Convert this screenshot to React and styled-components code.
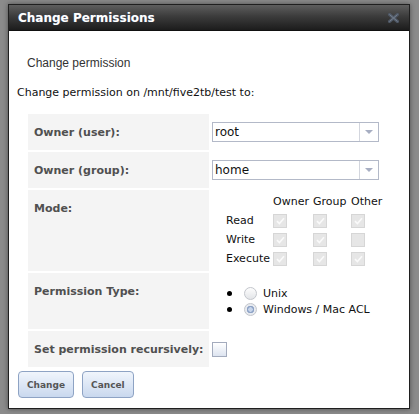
import React from "react";
import styled, { createGlobalStyle } from "styled-components";

const GlobalStyle = createGlobalStyle`
  html, body { margin: 0; padding: 0; background: #8b8b8b; }
  body { font-family: "DejaVu Sans", Verdana, sans-serif; }
`;

const Page = styled.div`
  width: 419px;
  height: 414px;
  padding: 4px 0 0 8px;
  box-sizing: border-box;
`;

const Dialog = styled.div`
  width: 402px;
  height: 405px;
  box-sizing: border-box;
  border: 1px solid #1f1f1f;
  background: #fff;
  box-shadow: 0 0 5px rgba(0, 0, 0, 0.45);
  display: flex;
  flex-direction: column;
`;

const TitleBar = styled.div`
  height: 25px;
  flex: none;
  display: flex;
  align-items: center;
  justify-content: space-between;
  padding: 0 10px 0 9px;
  background: linear-gradient(#5e5e5e, #3c3c3c 45%, #1c1c1c);
  border-bottom: 1px solid #111;
`;

const Title = styled.span`
  font-family: "DejaVu Sans", Verdana, sans-serif;
  font-weight: bold;
  font-size: 12px;
  color: #fff;
  text-shadow: 0 0 1px rgba(120, 150, 200, 0.6);
`;

const Body = styled.div`
  padding: 0 8px;
  display: flex;
  flex-direction: column;
`;

const Intro = styled.div`
  margin: 24px 0 0 10px;
  font-family: "Liberation Sans", Arial, sans-serif;
  font-size: 12px;
  line-height: 16px;
  color: #333;
`;

const PathLine = styled.div`
  margin-top: 15px;
  font-size: 11px;
  line-height: 14px;
  color: #111;
`;

const FormGrid = styled.div`
  margin: 14px 0 0 11px;
  display: grid;
  grid-template-columns: 181px 1fr;
  grid-template-rows: 36px 36px 81px 56px 36px;
  column-gap: 2px;
  row-gap: 2px;
`;

const Label = styled.div`
  background: #f4f4f4;
  padding: 12px 6px 0;
  font-weight: bold;
  font-size: 11px;
  line-height: 13px;
  color: #505050;
  white-space: nowrap;
  box-sizing: border-box;
`;

const Value = styled.div`
  box-sizing: border-box;
  padding: ${(p) => p.$pad || "0"};
  display: ${(p) => (p.$center ? "flex" : "block")};
  align-items: center;
`;

const Select = styled.div`
  width: 167px;
  height: 20px;
  box-sizing: border-box;
  border: 1px solid #b3b9c8;
  background: #fff;
  display: flex;
  align-items: stretch;
`;

const SelectText = styled.span`
  flex: 1;
  font-size: 12px;
  line-height: 18px;
  padding-left: 2px;
  color: #111;
`;

const SelectArrow = styled.span`
  width: 18px;
  border-left: 1px solid #d3d6de;
  display: flex;
  align-items: center;
  justify-content: center;
  &::after {
    content: "";
    border-left: 4px solid transparent;
    border-right: 4px solid transparent;
    border-top: 4px solid #a7aec2;
  }
`;

const ModeGrid = styled.div`
  margin: 2px 0 0 13px;
  display: grid;
  grid-template-columns: 47px 40px 38px 36px;
  grid-auto-rows: 19px;
  align-items: center;
  font-size: 11px;
  color: #111;
`;

const ModeCell = styled.span`
  padding-left: 2px;
  display: flex;
  align-items: center;
  white-space: nowrap;
`;

const Box = styled.span`
  width: 14px;
  height: 14px;
  box-sizing: border-box;
  border: 1px solid #d6d6d6;
  background: #e6e6e6;
  display: inline-flex;
  align-items: center;
  justify-content: center;
`;

const RecurseBox = styled.span`
  width: 15px;
  height: 15px;
  box-sizing: border-box;
  border: 1px solid #a3abbd;
  background: linear-gradient(#ffffff, #dde4f0);
  margin-left: 1px;
`;

const RadioList = styled.ul`
  list-style: none;
  margin: 0;
  padding: 12px 0 0 16px;
`;

const RadioItem = styled.li`
  height: 16px;
  display: flex;
  align-items: center;
  font-size: 11px;
  color: #111;
`;

const Bullet = styled.span`
  width: 5px;
  height: 5px;
  border-radius: 50%;
  background: #000;
  margin-right: 12px;
`;

const Radio = styled.span`
  width: 13px;
  height: 13px;
  box-sizing: border-box;
  border-radius: 50%;
  border: 1px solid #c3c6cc;
  background: ${(p) =>
    p.$checked
      ? "radial-gradient(circle, #c7d5ea 0 2px, #8ea3c6 2.5px 3.5px, #e8ebf0 4px)"
      : "linear-gradient(#fdfdfd, #e3e5e8)"};
  margin-right: 6px;
`;

const Buttons = styled.div`
  margin: 4px 0 0 1px;
  display: flex;
  gap: 8px;
`;

const Button = styled.button`
  height: 27px;
  padding: 0 8px;
  border: 1px solid #8ea3c4;
  border-radius: 4px;
  background: linear-gradient(#f0f5fc, #d9e4f4 60%, #c9d8ee);
  font-family: "DejaVu Sans", Verdana, sans-serif;
  font-weight: bold;
  font-size: 9px;
  color: #555;
  cursor: pointer;
`;

const Check = () => (
  <svg width="9" height="8" viewBox="0 0 9 8">
    <path d="M1 4.2 L3.4 6.5 L8 1.2" fill="none" stroke="#fafafa" strokeWidth="1.6" />
  </svg>
);

const CloseIcon = () => (
  <svg width="11" height="10" viewBox="0 0 11 10">
    <path d="M1.5 1.5 L9.5 8.5 M9.5 1.5 L1.5 8.5" stroke="#4f5866" strokeWidth="3" strokeLinecap="square" />
    <path d="M1.5 1.5 L9.5 8.5 M9.5 1.5 L1.5 8.5" stroke="#76818f" strokeWidth="1" />
  </svg>
);

const CheckBox = ({ checked }) => <Box>{checked ? <Check /> : null}</Box>;

const modeRows = [
  ["Read", true, true, true],
  ["Write", true, true, false],
  ["Execute", true, true, true],
];

export default function App() {
  return (
    <>
      <GlobalStyle />
      <Page>
        <Dialog>
          <TitleBar>
            <Title>Change Permissions</Title>
            <CloseIcon />
          </TitleBar>
          <Body>
            <Intro>Change permission</Intro>
            <PathLine>Change permission on /mnt/five2tb/test to:</PathLine>
            <FormGrid>
              <Label>Owner (user):</Label>
              <Value $pad="8px 0 0 1px">
                <Select>
                  <SelectText>root</SelectText>
                  <SelectArrow />
                </Select>
              </Value>
              <Label>Owner (group):</Label>
              <Value $pad="8px 0 0 1px">
                <Select>
                  <SelectText>home</SelectText>
                  <SelectArrow />
                </Select>
              </Value>
              <Label>Mode:</Label>
              <Value>
                <ModeGrid>
                  <ModeCell />
                  <ModeCell>Owner</ModeCell>
                  <ModeCell>Group</ModeCell>
                  <ModeCell>Other</ModeCell>
                  {modeRows.map(([name, a, b, c]) => (
                    <React.Fragment key={name}>
                      <ModeCell>{name}</ModeCell>
                      <ModeCell><CheckBox checked={a} /></ModeCell>
                      <ModeCell><CheckBox checked={b} /></ModeCell>
                      <ModeCell><CheckBox checked={c} /></ModeCell>
                    </React.Fragment>
                  ))}
                </ModeGrid>
              </Value>
              <Label>Permission Type:</Label>
              <Value>
                <RadioList>
                  <RadioItem><Bullet /><Radio />Unix</RadioItem>
                  <RadioItem><Bullet /><Radio $checked />Windows / Mac ACL</RadioItem>
                </RadioList>
              </Value>
              <Label>Set permission recursively:</Label>
              <Value $center>
                <RecurseBox />
              </Value>
            </FormGrid>
            <Buttons>
              <Button>Change</Button>
              <Button>Cancel</Button>
            </Buttons>
          </Body>
        </Dialog>
      </Page>
    </>
  );
}
